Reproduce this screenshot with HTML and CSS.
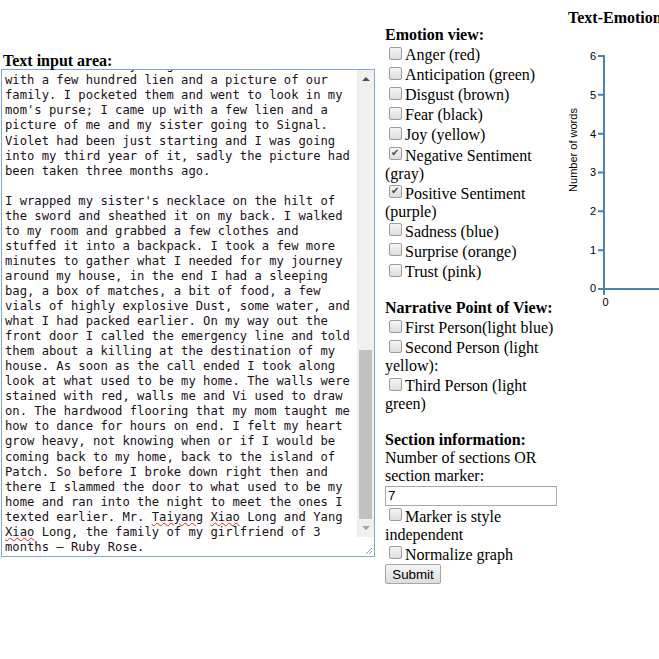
FILE: index.html
```html
<!DOCTYPE html>
<html lang="en">
<head>
<meta charset="utf-8">
<title>Text-Emotion</title>
<link rel="stylesheet" href="styles.css">
</head>
<body>
<div class="page">
  <div class="main">
    <div class="col-input">
      <div class="label-b">Text input area:</div>
      <div class="ta">
        <div class="ta-text">
<div class="ta-lines">and took out everything that was in it. I came up
with a few hundred lien and a picture of our
family. I pocketed them and went to look in my
mom's purse; I came up with a few lien and a
picture of me and my sister going to Signal.
Violet had been just starting and I was going
into my third year of it, sadly the picture had
been taken three months ago.

I wrapped my sister's necklace on the hilt of
the sword and sheathed it on my back. I walked
to my room and grabbed a few clothes and
stuffed it into a backpack. I took a few more
minutes to gather what I needed for my journey
around my house, in the end I had a sleeping
bag, a box of matches, a bit of food, a few
vials of highly explosive Dust, some water, and
what I had packed earlier. On my way out the
front door I called the emergency line and told
them about a killing at the destination of my
house. As soon as the call ended I took along
look at what used to be my home. The walls were
stained with red, walls me and Vi used to draw
on. The hardwood flooring that my mom taught me
how to dance for hours on end. I felt my heart
grow heavy, not knowing when or if I would be
coming back to my home, back to the island of
Patch. So before I broke down right then and
there I slammed the door to what used to be my
home and ran into the night to meet the ones I
texted earlier. Mr. <span class="sp">Taiyang</span> <span class="sp">Xiao</span> Long and Yang
<span class="sp">Xiao</span> Long, the family of my girlfriend of 3
months – Ruby Rose.</div>
        </div>
        <div class="sb">
          <div class="sb-btn"><span class="arr-up"></span></div>
          <div class="sb-gap"></div>
          <div class="sb-thumb"></div>
          <div class="sb-rest"></div>
          <div class="sb-btn"><span class="arr-down"></span></div>
          <div class="sb-corner">
            <svg width="17" height="19" viewBox="0 0 17 19"><path d="M9 17 L15 11 M12 17 L15 14" stroke="#9a9a9a" stroke-width="1" fill="none"/></svg>
          </div>
        </div>
      </div>
    </div>

    <div class="col-opts">
      <b>Emotion view:</b><br>
      <label><input type="checkbox" class="cb">Anger (red)</label><br>
      <label><input type="checkbox" class="cb">Anticipation (green)</label><br>
      <label><input type="checkbox" class="cb">Disgust (brown)</label><br>
      <label><input type="checkbox" class="cb">Fear (black)</label><br>
      <label><input type="checkbox" class="cb">Joy (yellow)</label><br>
      <label><input type="checkbox" class="cb" checked>Negative Sentiment (gray)</label><br>
      <label><input type="checkbox" class="cb" checked>Positive Sentiment (purple)</label><br>
      <label><input type="checkbox" class="cb">Sadness (blue)</label><br>
      <label><input type="checkbox" class="cb">Surprise (orange)</label><br>
      <label><input type="checkbox" class="cb">Trust (pink)</label><br>
      <br>
      <b>Narrative Point of View:</b><br>
      <label><input type="checkbox" class="cb">First Person(light blue)</label><br>
      <label><input type="checkbox" class="cb">Second Person (light yellow):</label><br>
      <label><input type="checkbox" class="cb">Third Person (light green)</label><br>
      <br>
      <b>Section information:</b><br>
      Number of sections OR section marker:<br>
      <input type="text" class="txt" value="7"><br>
      <label><input type="checkbox" class="cb">Marker is style independent</label><br>
      <label><input type="checkbox" class="cb">Normalize graph</label><br>
      <button class="btn">Submit</button>
    </div>
  </div>

  <div class="col-chart">
    <div class="chart-title">Text-Emotion Graph</div>
    <svg class="chart" width="91" height="290" viewBox="0 0 91 290">
      <g class="ticks" font-family="Liberation Sans, Arial, sans-serif" font-size="11" text-anchor="end" fill="#000">
        <text x="28" y="33">6</text>
        <text x="28" y="72">5</text>
        <text x="28" y="111">4</text>
        <text x="28" y="149">3</text>
        <text x="28" y="188">2</text>
        <text x="28" y="227">1</text>
        <text x="28" y="265">0</text>
      </g>
      <g stroke="#4682b4" stroke-width="2" fill="none">
        <path d="M30 29 H36 V268"/>
        <path d="M30 67.8 H36 M30 106.7 H36 M30 145.5 H36 M30 184.3 H36 M30 223.2 H36"/>
        <path d="M30 262 H91"/>
      </g>
      <text x="37.5" y="279" font-family="Liberation Sans, Arial, sans-serif" font-size="11" text-anchor="middle">0</text>
      <text transform="translate(8.5,123) rotate(-90)" font-family="Liberation Sans, Arial, sans-serif" font-size="11" text-anchor="middle">Number of words</text>
    </svg>
  </div>
</div>
</body>
</html>
```

FILE: styles.css
```css
html, body {
  margin: 0;
  padding: 0;
  background: #fff;
  overflow: hidden;
}

body {
  font-family: "Liberation Serif", "Times New Roman", serif;
  font-size: 16px;
  color: #000;
}

.page {
  display: flex;
  align-items: flex-start;
  padding-top: 9px;
  width: 720px;
}

.main {
  display: flex;
  align-items: center;
  gap: 10px;
  margin-top: 17px;
}

.col-input {
  padding-left: 1px;
}

.label-b {
  font-weight: bold;
  margin-left: 2px;
  line-height: 16.5px;
}

.ta {
  display: flex;
  width: 374px;
  height: 488px;
  box-sizing: border-box;
  border: 1px solid #7fa7de;
  background: #fff;
}

.ta-text {
  flex: 1;
  overflow: hidden;
  padding-left: 3px;
}

.ta-lines {
  margin-top: -12px;
  white-space: pre;
  font-family: "DejaVu Sans Mono", "Liberation Mono", monospace;
  font-size: 12.2px;
  line-height: 15.05px;
  color: #1a1020;
}

.sp {
  text-decoration: underline wavy #e0201c;
  text-decoration-thickness: 1px;
  text-underline-offset: 1px;
}

.sb {
  width: 17px;
  display: flex;
  flex-direction: column;
  background: #f0f0f0;
}

.sb-btn {
  height: 17px;
  display: flex;
  align-items: center;
  justify-content: center;
}

.arr-up {
  width: 0;
  height: 0;
  border-left: 4px solid transparent;
  border-right: 4px solid transparent;
  border-bottom: 4px solid #505050;
}

.arr-down {
  width: 0;
  height: 0;
  border-left: 4px solid transparent;
  border-right: 4px solid transparent;
  border-top: 4px solid #a3a3a3;
}

.sb-gap {
  height: 263px;
}

.sb-thumb {
  height: 170px;
  margin: 0 2px;
  background: #c1c1c1;
}

.sb-rest {
  flex: 1;
}

.sb-corner {
  height: 19px;
  background: #fff;
  border-top: 1px solid #f0f0f0;
}

.sb-corner svg {
  display: block;
}

.col-opts {
  width: 172px;
  line-height: 18px;
}

.cb {
  appearance: none;
  -webkit-appearance: none;
  width: 13px;
  height: 13px;
  margin: 2.7px 3px 3px 4px;
  box-sizing: border-box;
  border: 1px solid #9c9c9c;
  border-radius: 2px;
  background: linear-gradient(#f6f6f6, #dcdcdc);
  vertical-align: -2.6px;
  position: relative;
}

.cb:checked::after {
  content: "✔";
  position: absolute;
  left: 1px;
  top: -2px;
  font-family: "DejaVu Sans", sans-serif;
  font-size: 10px;
  line-height: 14px;
  color: #4a4a4a;
}

.txt {
  width: 172px;
  height: 20px;
  box-sizing: border-box;
  margin: 0;
  padding: 1px 2px;
  border: 1px solid #a9a9a9;
  font-family: "Liberation Sans", Arial, sans-serif;
  font-size: 13.33px;
  vertical-align: middle;
}

.btn {
  width: 56px;
  height: 20px;
  margin: 0;
  padding: 0 6px;
  box-sizing: border-box;
  border: 1px solid #a6a6a6;
  border-radius: 2px;
  background: linear-gradient(#f6f6f6, #dddddd);
  font-family: "Liberation Sans", Arial, sans-serif;
  font-size: 13.33px;
  color: #000;
  vertical-align: middle;
}

.col-chart {
  margin-left: 11px;
  margin-top: 0;
  width: 91px;
  overflow: visible;
}

.chart-title {
  font-weight: bold;
  white-space: nowrap;
  line-height: 18px;
}

.chart {
  display: block;
}
```
